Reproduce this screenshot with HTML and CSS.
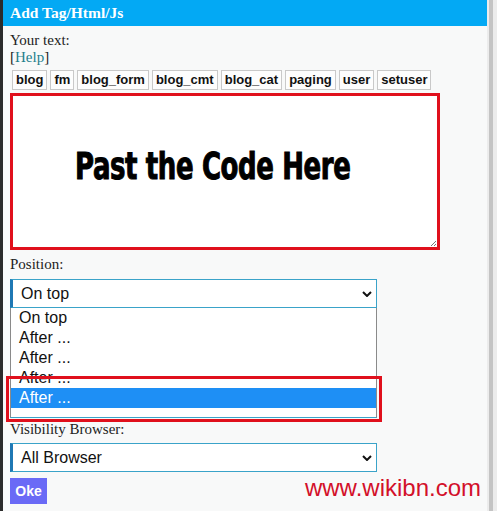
FILE: index.html
```html
<!DOCTYPE html>
<html lang="en">
<head>
  <meta charset="UTF-8" />
  <meta name="viewport" content="width=device-width, initial-scale=1" />
  <title>Add Tag/Html/Js</title>
  <link rel="stylesheet" href="styles.css">
</head>
<body>
  <div class="frame">
    <div class="edge-left"></div>

    <div class="panel">
      <!-- Panel title -->
      <div class="panel-title">Add Tag/Html/Js</div>

      <div class="panel-body">
        <div class="label">Your text:</div>
        <div class="label">[<a class="help-link" href="#">Help</a>]</div>

        <!-- Quick insert tags -->
        <div class="tag-list">
          <span class="tag">blog</span>
          <span class="tag">fm</span>
          <span class="tag">blog_form</span>
          <span class="tag">blog_cmt</span>
          <span class="tag">blog_cat</span>
          <span class="tag">paging</span>
          <span class="tag">user</span>
          <span class="tag">setuser</span>
        </div>

        <div class="code-box">
          <span class="code-hint">Past the Code Here</span>
          <svg class="resize-grip" viewBox="0 0 8 8" width="8" height="8" xmlns="http://www.w3.org/2000/svg">
            <path d="M7 2L2 7M7 5L5 7" stroke="#777" stroke-width="1" fill="none"/>
          </svg>
        </div>

        <div class="label label-gap">Position:</div>
        <div class="field">
          <div class="select">
            <span>On top</span>
            <svg class="chevron" viewBox="0 0 10 6" width="10" height="6" xmlns="http://www.w3.org/2000/svg">
              <path d="M1 1L5 5L9 1" stroke="#111" stroke-width="2" fill="none"/>
            </svg>
          </div>
          <!-- Open option list -->
          <ul class="option-list">
            <li>On top</li>
            <li>After ...</li>
            <li>After ...</li>
            <li>After ...</li>
            <li class="selected">After ...</li>
          </ul>
          <div class="highlight"></div>
        </div>

        <div class="label">Visibility Browser:</div>
        <div class="select">
          <span>All Browser</span>
          <svg class="chevron" viewBox="0 0 10 6" width="10" height="6" xmlns="http://www.w3.org/2000/svg">
            <path d="M1 1L5 5L9 1" stroke="#111" stroke-width="2" fill="none"/>
          </svg>
        </div>

        <div class="submit-row">
          <button class="oke-btn">Oke</button>
          <span class="watermark">www.wikibn.com</span>
        </div>
      </div>
    </div>

    <div class="edge-right">
      <div class="scroll-track"></div>
    </div>
  </div>
</body>
</html>
```

FILE: styles.css
```css
/* Reset */
* {
  margin: 0;
  padding: 0;
  box-sizing: border-box;
}

body {
  font-family: 'Liberation Serif', 'Times New Roman', serif;
  background: #f8f9f9;
  color: #222;
  width: 497px;
  height: 511px;
  overflow: hidden;
}

.frame {
  display: flex;
  height: 511px;
}

.edge-left {
  width: 3px;
  background: #2b2b2b;
}

.panel {
  width: 484px;
  background: #f8f9f9;
}

.edge-right {
  width: 10px;
  padding-left: 2px;
  background: #ececec;
}

.scroll-track {
  width: 4px;
  height: 100%;
  background: #c4c4c4;
}

/* Title bar */
.panel-title {
  height: 26px;
  background: #03a9f4;
  color: #fff;
  font-weight: bold;
  font-size: 15.5px;
  line-height: 25px;
  padding-left: 7px;
}

.panel-body {
  padding: 6px 0 0 7px;
}

.label {
  font-size: 15px;
  line-height: 17px;
}

.label-gap {
  margin-top: 6px;
}

.help-link {
  color: #1e7f8c;
  text-decoration: none;
}

/* Tags */
.tag-list {
  display: flex;
  gap: 3px;
  margin: 4px 0 3px 2px;
}

.tag {
  font-family: 'Liberation Sans', Arial, sans-serif;
  font-weight: bold;
  font-size: 13px;
  color: #111;
  background: #fdfdfd;
  border: 1px solid #c9c9c9;
  height: 20px;
  line-height: 18px;
  padding: 0 3px;
}

/* Code area */
.code-box {
  position: relative;
  width: 430px;
  height: 157px;
  background: #fff;
  border: 3px solid #e0101c;
  padding: 50px 0 0 62px;
}

.code-hint {
  display: inline-block;
  font-family: 'DejaVu Sans Condensed', 'DejaVu Sans', sans-serif;
  font-weight: bold;
  font-size: 38px;
  line-height: 40px;
  color: #000;
  letter-spacing: -0.5px;
  -webkit-text-stroke: 1px #000;
  transform: scaleX(0.76);
  transform-origin: left center;
  white-space: nowrap;
}

.resize-grip {
  position: absolute;
  right: 0;
  bottom: 0;
}

/* Select boxes */
.field {
  position: relative;
  margin-top: 6px;
}

.select {
  display: flex;
  align-items: center;
  justify-content: space-between;
  width: 367px;
  height: 29px;
  background: #fff;
  border: 1px solid #3aa3c9;
  border-left: 3px solid #1f78b4;
  padding: 0 4px 0 8px;
  font-family: 'Liberation Sans', Arial, sans-serif;
  font-size: 16px;
  color: #111;
}

.label + .select {
  margin-top: 5px;
}

.option-list {
  list-style: none;
  width: 367px;
  height: 110px;
  background: #fff;
  border: 1px solid #8a8a8a;
  border-top: none;
  border-bottom-color: #3aa3c9;
  font-family: 'Liberation Sans', Arial, sans-serif;
  font-size: 16px;
  color: #111;
  margin-bottom: 3px;
}

.option-list li {
  height: 20px;
  line-height: 20px;
  padding-left: 8px;
}

.option-list li.selected {
  background: #1e8ff5;
  color: #fff;
}

.highlight {
  position: absolute;
  left: -4px;
  top: 97px;
  width: 376px;
  height: 46px;
  border: 3px solid #e0101c;
}

/* Submit */
.submit-row {
  display: flex;
  align-items: flex-end;
  margin-top: 4px;
}

.oke-btn {
  width: 37px;
  height: 26px;
  background: #6a6af6;
  color: #fff;
  border: none;
  font-family: 'Liberation Sans', Arial, sans-serif;
  font-weight: bold;
  font-size: 14px;
}

.watermark {
  margin-left: auto;
  margin-right: 6px;
  margin-bottom: 4px;
  font-family: 'Liberation Sans', Arial, sans-serif;
  font-size: 24px;
  line-height: 24px;
  color: #d3102a;
}
```
